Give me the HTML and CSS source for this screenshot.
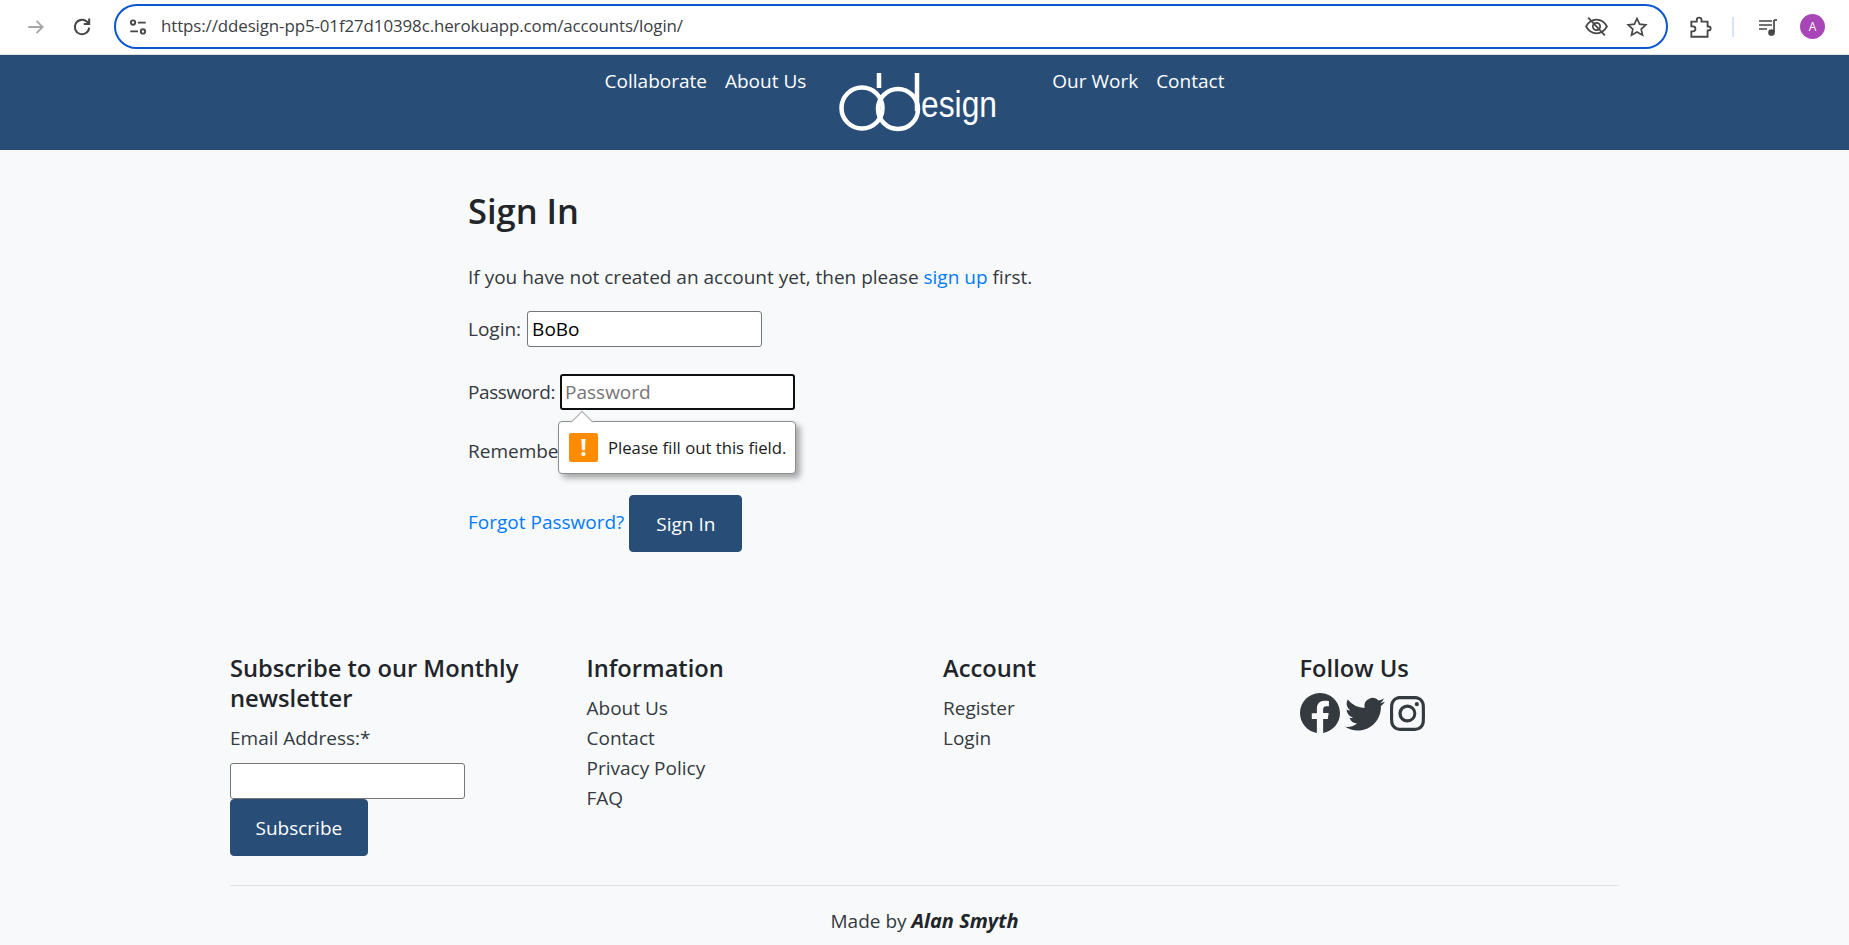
FILE: index.html
```html
<!DOCTYPE html>
<html lang="en">
<head>
    <meta charset="UTF-8">
    <meta name="viewport" content="width=device-width, initial-scale=1.0">
    <title>Sign In</title>
    <link rel="stylesheet" href="styles.css">
</head>
<body>
    <div class="browser-bar">
        <svg class="bar-icon forward" viewBox="0 0 20 20"><path d="M3 10h13M10.500 4.500 16 10l-5.500 5.500"/></svg>
        <svg class="bar-icon reload" viewBox="0 0 20 20"><path d="M16 10.500a6 6 0 1 1-1.800-4.800L16 7.500M16 3v4.500h-4.500"/></svg>
        <div class="address">
            <svg class="bar-icon tune" viewBox="0 0 20 20"><circle cx="5.500" cy="6" r="2"/><path d="M10 6h7M3 14h7"/><circle cx="14.500" cy="14" r="2"/></svg>
            <span class="url">https://ddesign-pp5-01f27d10398c.herokuapp.com/accounts/login/</span>
            <svg class="bar-icon eye" viewBox="0 0 24 24"><path d="M2 12c2.500-4.500 6-6.500 10-6.500s7.500 2 10 6.500c-2.500 4.500-6 6.500-10 6.500S4.500 16.500 2 12z"/><circle cx="12" cy="12" r="3.500"/><path d="M4 3.500 20 20.500"/></svg>
            <svg class="bar-icon star" viewBox="0 0 24 24"><path d="m12 3.500 2.600 5.700 6.200.700-4.600 4.200 1.300 6.100L12 17.100l-5.500 3.100 1.300-6.100-4.600-4.200 6.200-.700z"/></svg>
        </div>
        <svg class="bar-icon puzzle" viewBox="0 0 24 24"><path d="M4 7h5V5.500a2.200 2.200 0 0 1 4.400 0V7H19v4.500h1a1.800 1.800 0 0 1 0 3.600h-1V21H4v-5h1.500a2.300 2.300 0 0 0 0-4.600H4z"/></svg>
        <span class="bar-divider"></span>
        <svg class="bar-icon queue" viewBox="0 0 24 24"><path d="M3 6h13M3 10h13M3 14h8M18 5v12"/><path d="M18 5h3"/><circle cx="15.500" cy="17.500" r="2.500" class="filled"/></svg>
        <span class="avatar">A</span>
    </div>

    <nav class="site-nav">
        <a href="#">Collaborate</a>
        <a href="#">About Us</a>
        <a href="#" class="logo">
            <svg viewBox="0 0 164 66" width="164" height="66">
                <g fill="none" stroke="#fff" stroke-width="4.500">
                    <circle cx="23" cy="35" r="20.500"/>
                    <circle cx="59" cy="36" r="20"/>
                    <path d="M40 0v15M78 0v38"/>
                </g>
                <text x="82" y="44" class="logo-text" textLength="76" lengthAdjust="spacingAndGlyphs">esign</text>
            </svg>
        </a>
        <a href="#">Our Work</a>
        <a href="#">Contact</a>
    </nav>

    <main class="content">
        <h1>Sign In</h1>
        <p>If you have not created an account yet, then please <a href="#">sign up</a> first.</p>
        <form>
            <p class="field"><label>Login:</label> <input type="text" value="BoBo"></p>
            <p class="field pw-field">
                <label>Password:</label> <input type="password" class="focused" placeholder="Password">
                <span class="bubble">
                    <span class="bubble-icon">!</span>
                    Please fill out this field.
                </span>
            </p>
            <p class="field remember"><label>Remembe</label></p>
            <div class="actions">
                <a href="#">Forgot Password?</a>
                <button type="button" class="btn">Sign In</button>
            </div>
        </form>
    </main>

    <footer class="site-footer">
        <div class="footer-cols">
            <div>
                <h4>Subscribe to our Monthly newsletter</h4>
                <label class="email-label">Email Address:*</label>
                <input type="email" class="email-input">
                <button type="button" class="btn">Subscribe</button>
            </div>
            <div>
                <h4>Information</h4>
                <a href="#">About Us</a>
                <a href="#">Contact</a>
                <a href="#">Privacy Policy</a>
                <a href="#">FAQ</a>
            </div>
            <div>
                <h4>Account</h4>
                <a href="#">Register</a>
                <a href="#">Login</a>
            </div>
            <div>
                <h4>Follow Us</h4>
                <div class="socials">
                    <svg class="social" viewBox="0 0 16 16"><path d="M16 8.049c0-4.446-3.582-8.05-8-8.05C3.580 0-.002 3.603-.002 8.050c0 4.017 2.926 7.347 6.750 7.951v-5.625h-2.030V8.050H6.750V6.275c0-2.017 1.195-3.131 3.022-3.131.876 0 1.791.157 1.791.157v1.980h-1.009c-.993 0-1.303.621-1.303 1.258v1.510h2.218l-.354 2.326H9.250V16c3.824-.604 6.750-3.934 6.750-7.951z"/></svg>
                    <svg class="social" viewBox="0 0 16 16"><path d="M5.026 15c6.038 0 9.341-5.003 9.341-9.334 0-.14 0-.282-.006-.422A6.685 6.685 0 0 0 16 3.542a6.658 6.658 0 0 1-1.889.518 3.301 3.301 0 0 0 1.447-1.817 6.533 6.533 0 0 1-2.087.793A3.286 3.286 0 0 0 7.875 6.030a9.325 9.325 0 0 1-6.767-3.429 3.289 3.289 0 0 0 1.018 4.382A3.323 3.323 0 0 1 .64 6.575v.045a3.288 3.288 0 0 0 2.632 3.218 3.203 3.203 0 0 1-.865.115 3.230 3.230 0 0 1-.614-.057 3.283 3.283 0 0 0 3.067 2.277A6.588 6.588 0 0 1 .78 13.580a6.320 6.320 0 0 1-.78-.045A9.344 9.344 0 0 0 5.026 15z"/></svg>
                    <svg class="social small" viewBox="0 0 16 16"><path d="M8 0C5.829 0 5.556.01 4.703.048 3.850.088 3.269.222 2.760.42a3.917 3.917 0 0 0-1.417.923A3.927 3.927 0 0 0 .42 2.760C.222 3.268.087 3.850.048 4.700.01 5.555 0 5.827 0 8.001c0 2.172.01 2.444.048 3.297.04.852.174 1.433.372 1.942.205.526.478.972.923 1.417.444.445.89.719 1.416.923.51.198 1.090.333 1.942.372C5.555 15.990 5.827 16 8 16s2.444-.01 3.298-.048c.851-.04 1.434-.174 1.943-.372a3.916 3.916 0 0 0 1.416-.923c.445-.445.718-.891.923-1.417.197-.509.332-1.090.372-1.942C15.990 10.445 16 10.173 16 8s-.01-2.445-.048-3.299c-.04-.851-.175-1.433-.372-1.941a3.926 3.926 0 0 0-.923-1.417A3.911 3.911 0 0 0 13.240.42c-.51-.198-1.092-.333-1.943-.372C10.443.01 10.172 0 7.998 0h.003zm-.717 1.442h.718c2.136 0 2.389.007 3.232.046.78.035 1.204.166 1.486.275.373.145.64.319.92.599.28.28.453.546.598.92.11.281.24.705.275 1.485.039.843.047 1.096.047 3.231s-.008 2.389-.047 3.232c-.035.78-.166 1.203-.275 1.485a2.470 2.470 0 0 1-.599.919c-.28.28-.546.453-.92.598-.28.11-.704.24-1.485.276-.843.038-1.096.047-3.232.047s-2.390-.009-3.233-.047c-.78-.036-1.203-.166-1.485-.276a2.478 2.478 0 0 1-.92-.598 2.480 2.480 0 0 1-.6-.92c-.109-.281-.24-.705-.275-1.485-.038-.843-.046-1.096-.046-3.233 0-2.136.008-2.388.046-3.231.036-.78.166-1.204.276-1.486.145-.373.319-.64.599-.92.28-.28.546-.453.92-.598.282-.11.705-.24 1.485-.276.738-.034 1.024-.044 2.515-.045v.002zm4.988 1.328a.96.96 0 1 0 0 1.920.96.96 0 0 0 0-1.920zm-4.270 1.122a4.109 4.109 0 1 0 0 8.217 4.109 4.109 0 0 0 0-8.217zm0 1.441a2.667 2.667 0 1 1 0 5.334 2.667 2.667 0 0 1 0-5.334z"/></svg>
                </div>
            </div>
        </div>
        <hr>
        <p class="credit">Made by <strong>Alan Smyth</strong></p>
    </footer>
</body>
</html>
```

FILE: styles.css
```css
/* General Styling */
* {
    box-sizing: border-box;
}

html, body {
    height: 945px;
    overflow: hidden;
}

body {
    margin: 0;
    font-family: 'Open Sans', 'Noto Sans', sans-serif;
    font-size: 19px;
    line-height: 30px;
    background: #f8f9fa;
    color: #343a40;
}

a {
    color: #007bff;
    text-decoration: none;
}

/* Browser toolbar */
.browser-bar {
    display: flex;
    align-items: center;
    height: 55px;
    background: #fff;
    border-bottom: 1px solid #dfe1e3;
    padding: 0 15px 1px 25px;
}

.bar-icon {
    fill: none;
    stroke: #474747;
    stroke-width: 1.700;
    flex: none;
}

.forward {
    width: 22px;
    height: 22px;
    stroke: #a5a6a8;
}

.reload {
    width: 24px;
    height: 24px;
    margin-left: 23px;
}

.address {
    display: flex;
    align-items: center;
    width: 1554px;
    height: 45px;
    margin-left: 20px;
    padding: 0 17px 0 11px;
    border: 2.500px solid #0b57d0;
    border-radius: 23px;
}

.tune {
    width: 22px;
    height: 22px;
}

.url {
    flex: 1;
    margin-left: 12px;
    padding-bottom: 2px;
    font-size: 16.900px;
    letter-spacing: -0.1px;
    color: #3c4043;
}

.eye {
    width: 25px;
    height: 25px;
}

.star {
    width: 24px;
    height: 24px;
    margin-left: 16px;
}

.puzzle {
    width: 26px;
    height: 26px;
    margin-left: 19px;
}

.bar-divider {
    width: 2px;
    height: 20px;
    margin-left: 19px;
    background: #d3e3fd;
}

.queue {
    width: 24px;
    height: 24px;
    margin-left: 22px;
}

.queue .filled {
    fill: #474747;
}

.avatar {
    width: 25px;
    height: 25px;
    margin-left: 20px;
    border-radius: 50%;
    background: #a846b8;
    color: #fff;
    font-size: 12px;
    line-height: 25px;
    text-align: center;
}

/* Nav */
.site-nav {
    display: flex;
    justify-content: center;
    height: 95px;
    padding: 11px 20px 0 0;
    background: #284e78;
}

.site-nav a {
    padding: 0 8px;
    margin: 0 1px;
    color: #fff;
    line-height: 30px;
}

.site-nav .logo {
    margin: 0;
    padding: 7px 40px 0 24px;
    height: 84px;
}

.logo-text {
    fill: #fff;
    font-family: 'Liberation Sans', sans-serif;
    font-size: 36px;
}

/* Sign in form */
.content {
    width: 1389px;
    margin: 0 auto;
    padding: 40px 0 0 238px;
}

h1 {
    margin: 0 0 30px;
    font-size: 34.500px;
    line-height: 42px;
    font-weight: 600;
    color: #212529;
}

p {
    margin: 0 0 16px;
}

.content > p {
    margin-bottom: 18px;
    height: 30px;
}

.field {
    display: flex;
    align-items: center;
    gap: 6px;
    height: 37px;
    margin-bottom: 26px;
}

.field.remember {
    height: 30px;
    margin: 15px 0 0;
}

input {
    width: 235px;
    height: 36px;
    padding: 1px 4px;
    font: inherit;
    color: #000;
    background: #fff;
    border: 1px solid #767676;
    border-radius: 3px;
}

input::placeholder {
    color: #757575;
}

.focused {
    border: 2px solid #101010;
    padding: 0 3px;
}

.pw-field {
    position: relative;
    gap: 5px;
}

.pw-field label {
    letter-spacing: -0.4px;
}

.bubble {
    position: absolute;
    left: 90px;
    top: 48px;
    display: flex;
    align-items: center;
    gap: 10px;
    width: 238px;
    height: 53px;
    padding: 0 10px;
    font-size: 16.700px;
    color: #202020;
    background: #fff;
    border: 1px solid #8e8e8e;
    border-radius: 4px;
    box-shadow: 4px 4px 6px rgba(0, 0, 0, 0.35);
    z-index: 2;
    white-space: nowrap;
}

.bubble::before {
    content: '';
    position: absolute;
    left: 15px;
    top: -8px;
    width: 15px;
    height: 15px;
    background: #fff;
    border-left: 1px solid #a8a8a8;
    border-top: 1px solid #a8a8a8;
    transform: rotate(45deg);
}

.bubble-icon {
    width: 29px;
    height: 29px;
    flex: none;
    border-radius: 2px;
    background: #ff8c00;
    color: #fff;
    font-weight: 700;
    font-size: 23px;
    line-height: 29px;
    text-align: center;
    z-index: 1;
}

.actions {
    display: flex;
    align-items: flex-start;
    gap: 5px;
    margin-top: 29px;
}

.actions a {
    margin-top: 12px;
}

.actions .btn {
    padding: 0 26px;
}

.btn {
    height: 57px;
    padding: 0 24.500px;
    font: inherit;
    color: #fff;
    background: #284e78;
    border: 1px solid #284e78;
    border-radius: 4px;
}

/* Footer */
.site-footer {
    width: 1389px;
    margin: 0 auto;
    padding-top: 101px;
}

.footer-cols {
    display: grid;
    grid-template-columns: repeat(4, 356.500px);
    height: 232px;
}

h4 {
    margin: 0 0 10px;
    width: 300px;
    font-size: 23.700px;
    line-height: 30px;
    font-weight: 600;
    color: #212529;
}

.footer-cols a {
    display: block;
    color: #343a40;
}

.email-label {
    display: block;
    margin-bottom: 10px;
}

.email-input {
    display: block;
}

.socials {
    display: flex;
    align-items: center;
    gap: 5px;
}

.social {
    width: 40px;
    height: 40px;
    fill: #343a40;
}

.social.small {
    width: 35px;
    height: 35px;
}

hr {
    margin: 0;
    border: 0;
    border-top: 1px solid #dee2e6;
}

.credit {
    margin-top: 20px;
    text-align: center;
}

.credit strong {
    font-size: 20px;
    font-style: italic;
    color: #212529;
}
```
